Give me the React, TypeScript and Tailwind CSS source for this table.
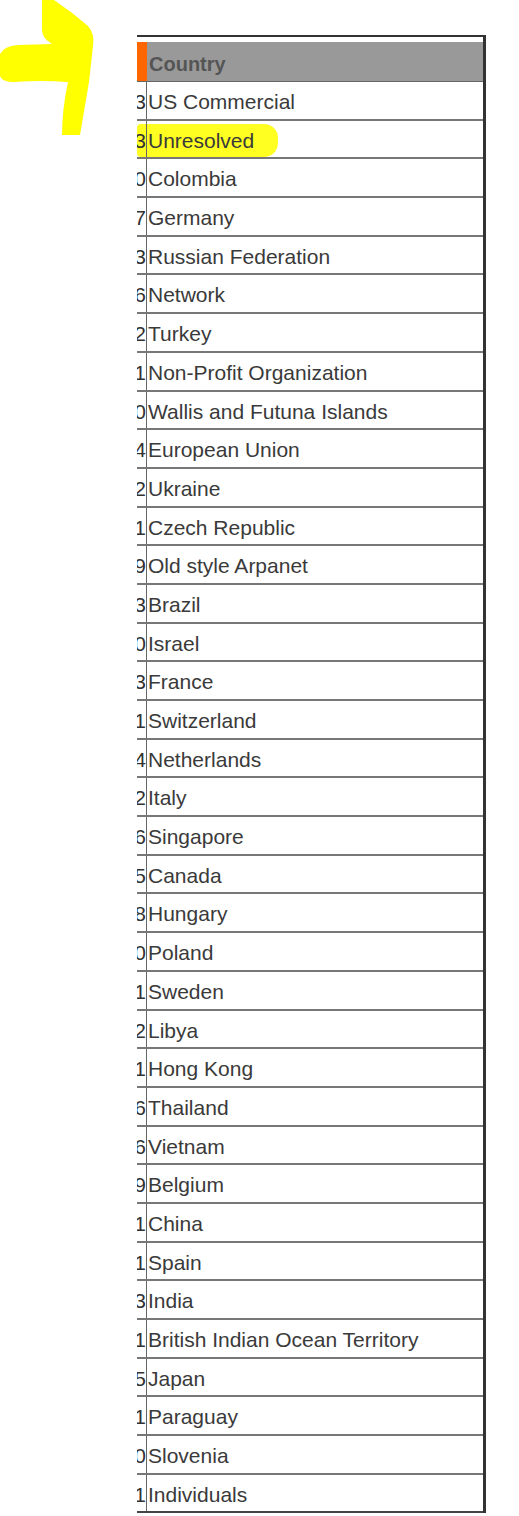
import React from "react";

const rows: [string, string][] = [
  ["13", "US Commercial"],
  ["3", "Unresolved"],
  ["0", "Colombia"],
  ["7", "Germany"],
  ["3", "Russian Federation"],
  ["6", "Network"],
  ["2", "Turkey"],
  ["1", "Non-Profit Organization"],
  ["0", "Wallis and Futuna Islands"],
  ["4", "European Union"],
  ["2", "Ukraine"],
  ["1", "Czech Republic"],
  ["9", "Old style Arpanet"],
  ["3", "Brazil"],
  ["0", "Israel"],
  ["3", "France"],
  ["1", "Switzerland"],
  ["4", "Netherlands"],
  ["2", "Italy"],
  ["6", "Singapore"],
  ["5", "Canada"],
  ["8", "Hungary"],
  ["0", "Poland"],
  ["1", "Sweden"],
  ["2", "Libya"],
  ["1", "Hong Kong"],
  ["6", "Thailand"],
  ["6", "Vietnam"],
  ["9", "Belgium"],
  ["1", "China"],
  ["1", "Spain"],
  ["3", "India"],
  ["1", "British Indian Ocean Territory"],
  ["5", "Japan"],
  ["1", "Paraguay"],
  ["0", "Slovenia"],
  ["1", "Individuals"],
];

export default function App() {
  return (
    <div
      className="relative w-[519px] h-[1516px] overflow-hidden bg-white"
      style={{ fontFamily: '"Liberation Sans", Arial, sans-serif' }}
    >
      <svg
        className="absolute left-0 top-0"
        width="100"
        height="140"
        viewBox="0 0 100 140"
      >
        <path
          d="M42,0 L54,0 Q72,12 88,26 Q95,34 93,46 L89,82 L80,135 L62,135 Q62,110 68,82 Q40,80 14,82 Q2,82 0,76 L0,54 Q4,46 18,45 L52,44 Q42,38 42,30 Z"
          fill="#ffff00"
        />
      </svg>

      <div className="ml-[137px] mt-[35px] w-[349px] border-t-2 border-r-[3px] border-[#333] pt-[5px]">
        <div className="flex h-[40px] border-b border-[#666] bg-[#999]">
          <div className="w-[10px] bg-[#ff6600]" />
          <div className="flex items-center pl-[2px] pt-[4px] text-[20px] font-bold text-[#555]">
            Country
          </div>
        </div>
        {rows.map(([n, name], i) => (
          <div
            key={i}
            className={`relative flex h-[38.7px] ${
              i === rows.length - 1 ? "border-b-2 border-[#444]" : "border-b-2 border-[#777]"
            }`}
          >
            {i === 1 && (
              <div className="absolute left-0 top-[3px] h-[33px] w-[141px] rounded-r-[14px] rounded-l-[4px] bg-[#ffff22]" />
            )}
            <div className="relative flex w-[10px] shrink-0 justify-end overflow-hidden border-r border-[#666] pt-[2px] text-[21px] leading-[36px] text-[#333]">
              <span className="whitespace-nowrap">{n}</span>
            </div>
            <div className="relative pl-[1px] pt-[2px] text-[21px] leading-[36px] text-[#3a3a3a] whitespace-nowrap">
              {name}
            </div>
          </div>
        ))}
      </div>
    </div>
  );
}
